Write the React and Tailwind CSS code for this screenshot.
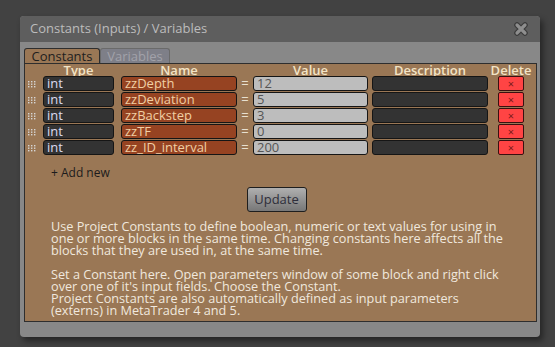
import { useState } from 'react'

const rows = [
  { type: 'int', name: 'zzDepth', value: '12' },
  { type: 'int', name: 'zzDeviation', value: '5' },
  { type: 'int', name: 'zzBackstep', value: '3' },
  { type: 'int', name: 'zzTF', value: '0' },
  { type: 'int', name: 'zz_ID_interval', value: '200' },
]

const cols = 'grid grid-cols-[18px_71px_7px_116px_16px_115px_4px_116px_10px_26px]'

function CloseIcon() {
  return (
    <svg width="16" height="16" viewBox="0 0 16 16">
      <path d="M4 4 L12 12 M12 4 L4 12" stroke="#3a3a3a" strokeWidth="5.5" strokeLinecap="round" />
      <path d="M4 4 L12 12 M12 4 L4 12" stroke="#8e8e8e" strokeWidth="3.2" strokeLinecap="round" />
    </svg>
  )
}

function DragHandle() {
  const dots = []
  for (let r = 0; r < 3; r++) {
    for (let c = 0; c < 3; c++) {
      dots.push(<rect key={`${r}-${c}`} x={c * 3} y={r * 2.5} width="1.4" height="1.4" fill="#d6d6d6" />)
    }
  }
  return (
    <svg width="9" height="7" viewBox="0 0 9 7" className="ml-[3px] mt-[5px]">
      {dots}
    </svg>
  )
}

function ConstantRow({ row }) {
  return (
    <div className={`${cols} h-[16px] items-start`}>
      <DragHandle />
      <div className="h-[15px] rounded-[3px] border border-[#151515] bg-[#333333] text-[#dcdcf0] pl-[3px] leading-[13px]">{row.type}</div>
      <div />
      <div className="h-[15px] rounded-[3px] border border-[#151515] bg-[#964322] text-[#f1cfa4] pl-[3px] leading-[13px]">{row.name}</div>
      <div className="text-center text-[#e8e0d0] leading-[15px]">=</div>
      <div className="h-[15px] rounded-[3px] border border-[#151515] bg-[#bdbdbd] text-[#555555] pl-[3px] leading-[13px]">{row.value}</div>
      <div />
      <div className="h-[15px] rounded-[3px] border border-[#151515] bg-[#333333]" />
      <div />
      <button className="h-[15px] rounded-[2px] border border-[#3a1010] bg-[#ff4444] text-[#7a1a1a] text-[11px] leading-[11px] flex items-center justify-center">×</button>
    </div>
  )
}

export default function App() {
  const [tab, setTab] = useState('constants')

  return (
    <div className="w-[555px] h-[347px] bg-[#424242] pt-[16px] pl-[20px] font-['Open_Sans','Noto_Sans',sans-serif] text-[13px] overflow-hidden">
      <div className="w-[520px] h-[321px] bg-[#888888] rounded-[4px] shadow-[3px_4px_6px_rgba(0,0,0,0.45)] flex flex-col">
        {/* Title bar */}
        <div className="h-[26px] bg-[#5e5e5e] rounded-t-[4px] flex items-center justify-between pl-[10px] pr-[11px]">
          <span className="text-[13px] text-[#bcbcbc]">Constants (Inputs) / Variables</span>
          <CloseIcon />
        </div>

        {/* Tabs */}
        <div className="flex pl-[4px] mt-[6px] h-[15px]">
          <button
            onClick={() => setTab('constants')}
            className="w-[76px] h-[15px] bg-[#9a7755] border border-b-0 border-[#2e2e2e] rounded-t-[3px] text-[#1e1e1e] leading-[13px]"
          >
            Constants
          </button>
          <button
            onClick={() => setTab('variables')}
            className="w-[70px] h-[15px] bg-[#7e7f88] border border-b-0 border-[#6a6a6a] rounded-t-[3px] text-[#a2a2aa] leading-[13px]"
          >
            Variables
          </button>
        </div>

        {/* Panel */}
        <div className="ml-[4px] mr-[3px] h-[259px] bg-[#9a7755] border border-[#2e2e2e]">
          <div className={`${cols} h-[12px] text-[#f3e4c6] font-semibold leading-[12px]`}>
            <div />
            <div className="text-center">Type</div>
            <div />
            <div className="text-center">Name</div>
            <div />
            <div className="text-center">Value</div>
            <div />
            <div className="text-center">Description</div>
            <div />
            <div className="text-center -mx-[8px] whitespace-nowrap">Delete</div>
          </div>

          {tab === 'constants' && rows.map(r => <ConstantRow key={r.name} row={r} />)}

          <div className="pl-[26px] mt-[10px] text-[12px] leading-[14px] text-[#1c1c1c]">+ Add new</div>

          <div className="flex justify-center mt-[7px] pr-[8px]">
            <button className="w-[60px] h-[25px] rounded-[3px] border border-[#1e1e1e] bg-gradient-to-b from-[#b0b0b0] to-[#777777] text-[#2e2e3a] text-[13px]">
              Update
            </button>
          </div>

          <p className="pl-[26px] pr-[30px] mt-[8px] text-[12.7px] leading-[12px] text-[#f0e8de]">
            Use Project Constants to define boolean, numeric or text values for using in one or more blocks in the same time. Changing constants here affects all the blocks that they are used in, at the same time.
            <br /><br />
            Set a Constant here. Open parameters window of some block and right click over one of it's input fields. Choose the Constant.
            <br />
            Project Constants are also automatically defined as input parameters (externs) in MetaTrader 4 and 5.
          </p>
        </div>
      </div>
    </div>
  )
}
